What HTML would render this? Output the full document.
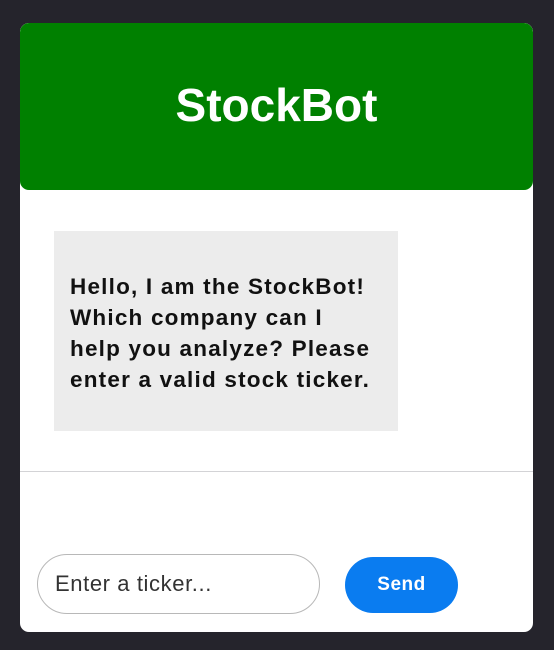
<!DOCTYPE html>
<html><head><style>
html,body{margin:0;padding:0;}
body{width:554px;height:650px;background:#25242c;position:relative;overflow:hidden;font-family:"Liberation Sans",Arial,sans-serif;}
.card{position:absolute;left:20px;top:23px;width:513px;height:609px;background:#fff;border-radius:9px;overflow:hidden;}
.hdr{position:absolute;left:0;top:0;width:513px;height:167px;background:#008000;border-radius:9px;color:#fff;font-weight:bold;font-size:46px;text-align:center;line-height:165px;}
.bub{position:absolute;left:34px;top:208px;width:344px;height:200px;background:#ececec;box-sizing:border-box;padding:40px 0 0 16px;font-weight:bold;font-size:22.5px;letter-spacing:1.2px;line-height:31px;color:#111;white-space:nowrap;}
.div{position:absolute;left:0;top:448px;width:513px;height:1px;background:#d3d3d6;}
.inp{position:absolute;left:17px;top:531px;width:283px;height:60px;box-sizing:border-box;border:1px solid #b8b8b8;border-radius:30px;font-size:22px;letter-spacing:0.6px;color:#333;padding-left:17px;line-height:58px;}
.btn{position:absolute;left:325px;top:534px;width:113px;height:56px;border-radius:28px;background:#0a7cf0;color:#fff;font-weight:bold;font-size:19px;letter-spacing:0.5px;text-align:center;line-height:56px;}
</style></head><body>
<div class="card">
<div class="hdr">StockBot</div>
<div class="bub">Hello, I am the StockBot!<br>Which company can I<br>help you analyze? Please<br>enter a valid stock ticker.</div>
<div class="div"></div>
<div class="inp">Enter a ticker...</div>
<div class="btn">Send</div>
</div>
</body></html>
